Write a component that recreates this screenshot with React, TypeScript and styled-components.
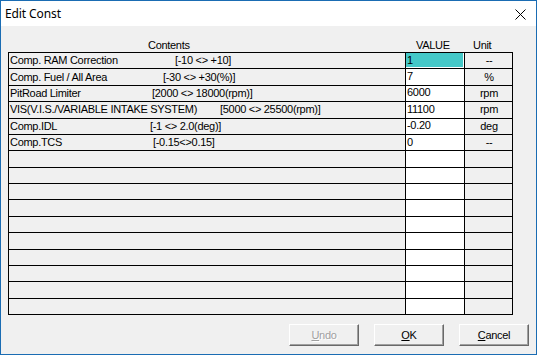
import React from "react";
import styled, { createGlobalStyle } from "styled-components";

const GlobalStyle = createGlobalStyle`
  html, body {
    margin: 0;
    padding: 0;
    background: #f0f0f0;
  }
`;

const uiFont = `"Liberation Sans", Arial, sans-serif`;

const Window = styled.div`
  width: 537px;
  height: 355px;
  box-sizing: border-box;
  border: 1px solid #1a6cb3;
  background: #f0f0f0;
  display: flex;
  flex-direction: column;
  font-family: ${uiFont};
  font-size: 11px;
  letter-spacing: -0.3px;
  color: #000;
`;

const TitleBar = styled.div`
  height: 25px;
  flex: 0 0 auto;
  background: #fff;
  display: flex;
  align-items: center;
  justify-content: space-between;
  padding: 0 10px 0 4px;
`;

const Title = styled.span`
  font-family: "Noto Sans", "Open Sans", sans-serif;
  font-size: 12px;
  letter-spacing: -0.1px;
  line-height: 1;
  padding-top: 1px;
`;

const CloseButton = styled.div`
  width: 11px;
  height: 11px;
  display: flex;
  margin-top: 1px;
`;

const Body = styled.div`
  flex: 1;
  display: flex;
  flex-direction: column;
  padding: 12px 0 0 7px;
`;

const HeaderRow = styled.div`
  display: grid;
  grid-template-columns: 398px 59px 48px;
  height: 14px;
  align-items: center;
  line-height: 13px;
`;

const HeaderLabel = styled.span<{ $pad: number }>`
  padding-left: ${(p) => p.$pad}px;
  white-space: nowrap;
`;

const Table = styled.div`
  width: 505px;
  height: 263px;
  box-sizing: border-box;
  border-left: 1px solid #000;
  border-top: 1px solid #000;
  display: flex;
  flex-direction: column;
`;

const Row = styled.div`
  flex: 1 1 0;
  min-height: 0;
  display: grid;
  grid-template-columns: 397px 59px 48px;
`;

const Cell = styled.div`
  border-right: 1px solid #000;
  border-bottom: 1px solid #000;
  display: flex;
  align-items: center;
  white-space: nowrap;
  overflow: hidden;
  line-height: 13px;
`;

const NameCell = styled(Cell)<{ $at: number }>`
  display: grid;
  grid-template-columns: ${(p) => p.$at}px auto;
  padding-left: 1px;
  align-content: center;
`;

const ValueCell = styled(Cell)`
  background: #fff;
  align-items: stretch;
`;

const ValueText = styled.span<{ $selected?: boolean }>`
  flex: 1;
  display: flex;
  align-items: center;
  padding-left: 1px;
  margin: 0 1px 1px 0;
  background: ${(p) => (p.$selected ? "#44c8c8" : "transparent")};
`;

const UnitCell = styled(Cell)`
  justify-content: center;
  padding-left: 1px;
`;

const ButtonBar = styled.div`
  display: flex;
  justify-content: flex-end;
  gap: 15px;
  padding: 9px 7px 0 0;
`;

const Button = styled.button<{ $disabled?: boolean }>`
  width: 70px;
  height: 22px;
  box-sizing: border-box;
  background: #f0f0f0;
  border-style: solid;
  border-width: 1px;
  border-color: #fff #696969 #696969 #fff;
  box-shadow: inset -1px -1px 0 #a0a0a0;
  font-family: ${uiFont};
  font-size: 11px;
  letter-spacing: -0.3px;
  padding: 0 0 1px;
  color: ${(p) => (p.$disabled ? "#a0a0a0" : "#000")};
  text-shadow: ${(p) => (p.$disabled ? "1px 1px 0 #fff" : "none")};
  cursor: default;

  & u {
    text-underline-offset: 1px;
  }
`;

type Const = {
  name: string;
  range: string;
  at: number;
  value: string;
  unit: string;
  selected?: boolean;
};

const consts: Const[] = [
  { name: "Comp. RAM Correction", range: "[-10 <> +10]", at: 165, value: "1", unit: "--", selected: true },
  { name: "Comp. Fuel / All Area", range: "[-30 <> +30(%)]", at: 153, value: "7", unit: "%" },
  { name: "PitRoad Limiter", range: "[2000 <> 18000(rpm)]", at: 142, value: "6000", unit: "rpm" },
  { name: "VIS(V.I.S./VARIABLE INTAKE SYSTEM)", range: "[5000 <> 25500(rpm)]", at: 210, value: "11100", unit: "rpm" },
  { name: "Comp.IDL", range: "[-1 <> 2.0(deg)]", at: 140, value: "-0.20", unit: "deg" },
  { name: "Comp.TCS", range: "[-0.15<>0.15]", at: 143, value: "0", unit: "--" },
];

const ROW_COUNT = 16;

const CloseIcon = () => (
  <svg width="11" height="11" viewBox="0 0 11 11">
    <path d="M0.5 0.5 L10.5 10.5 M10.5 0.5 L0.5 10.5" stroke="#000" strokeWidth="1" />
  </svg>
);

export default function App() {
  const rows = Array.from({ length: ROW_COUNT }, (_, i) => consts[i]);

  return (
    <>
      <GlobalStyle />
      <Window>
        <TitleBar>
          <Title>Edit Const</Title>
          <CloseButton>
            <CloseIcon />
          </CloseButton>
        </TitleBar>
        <Body>
          <HeaderRow>
            <HeaderLabel $pad={140}>Contents</HeaderLabel>
            <HeaderLabel $pad={10}>VALUE</HeaderLabel>
            <HeaderLabel $pad={8}>Unit</HeaderLabel>
          </HeaderRow>
          <Table>
            {rows.map((c, i) => (
              <Row key={i}>
                <NameCell $at={c ? c.at : 0}>
                  {c && <span>{c.name}</span>}
                  {c && <span>{c.range}</span>}
                </NameCell>
                <ValueCell>
                  <ValueText $selected={c?.selected}>{c?.value}</ValueText>
                </ValueCell>
                <UnitCell>{c?.unit}</UnitCell>
              </Row>
            ))}
          </Table>
          <ButtonBar>
            <Button $disabled>
              <u>U</u>ndo
            </Button>
            <Button>
              <u>O</u>K
            </Button>
            <Button>
              <u>C</u>ancel
            </Button>
          </ButtonBar>
        </Body>
      </Window>
    </>
  );
}
